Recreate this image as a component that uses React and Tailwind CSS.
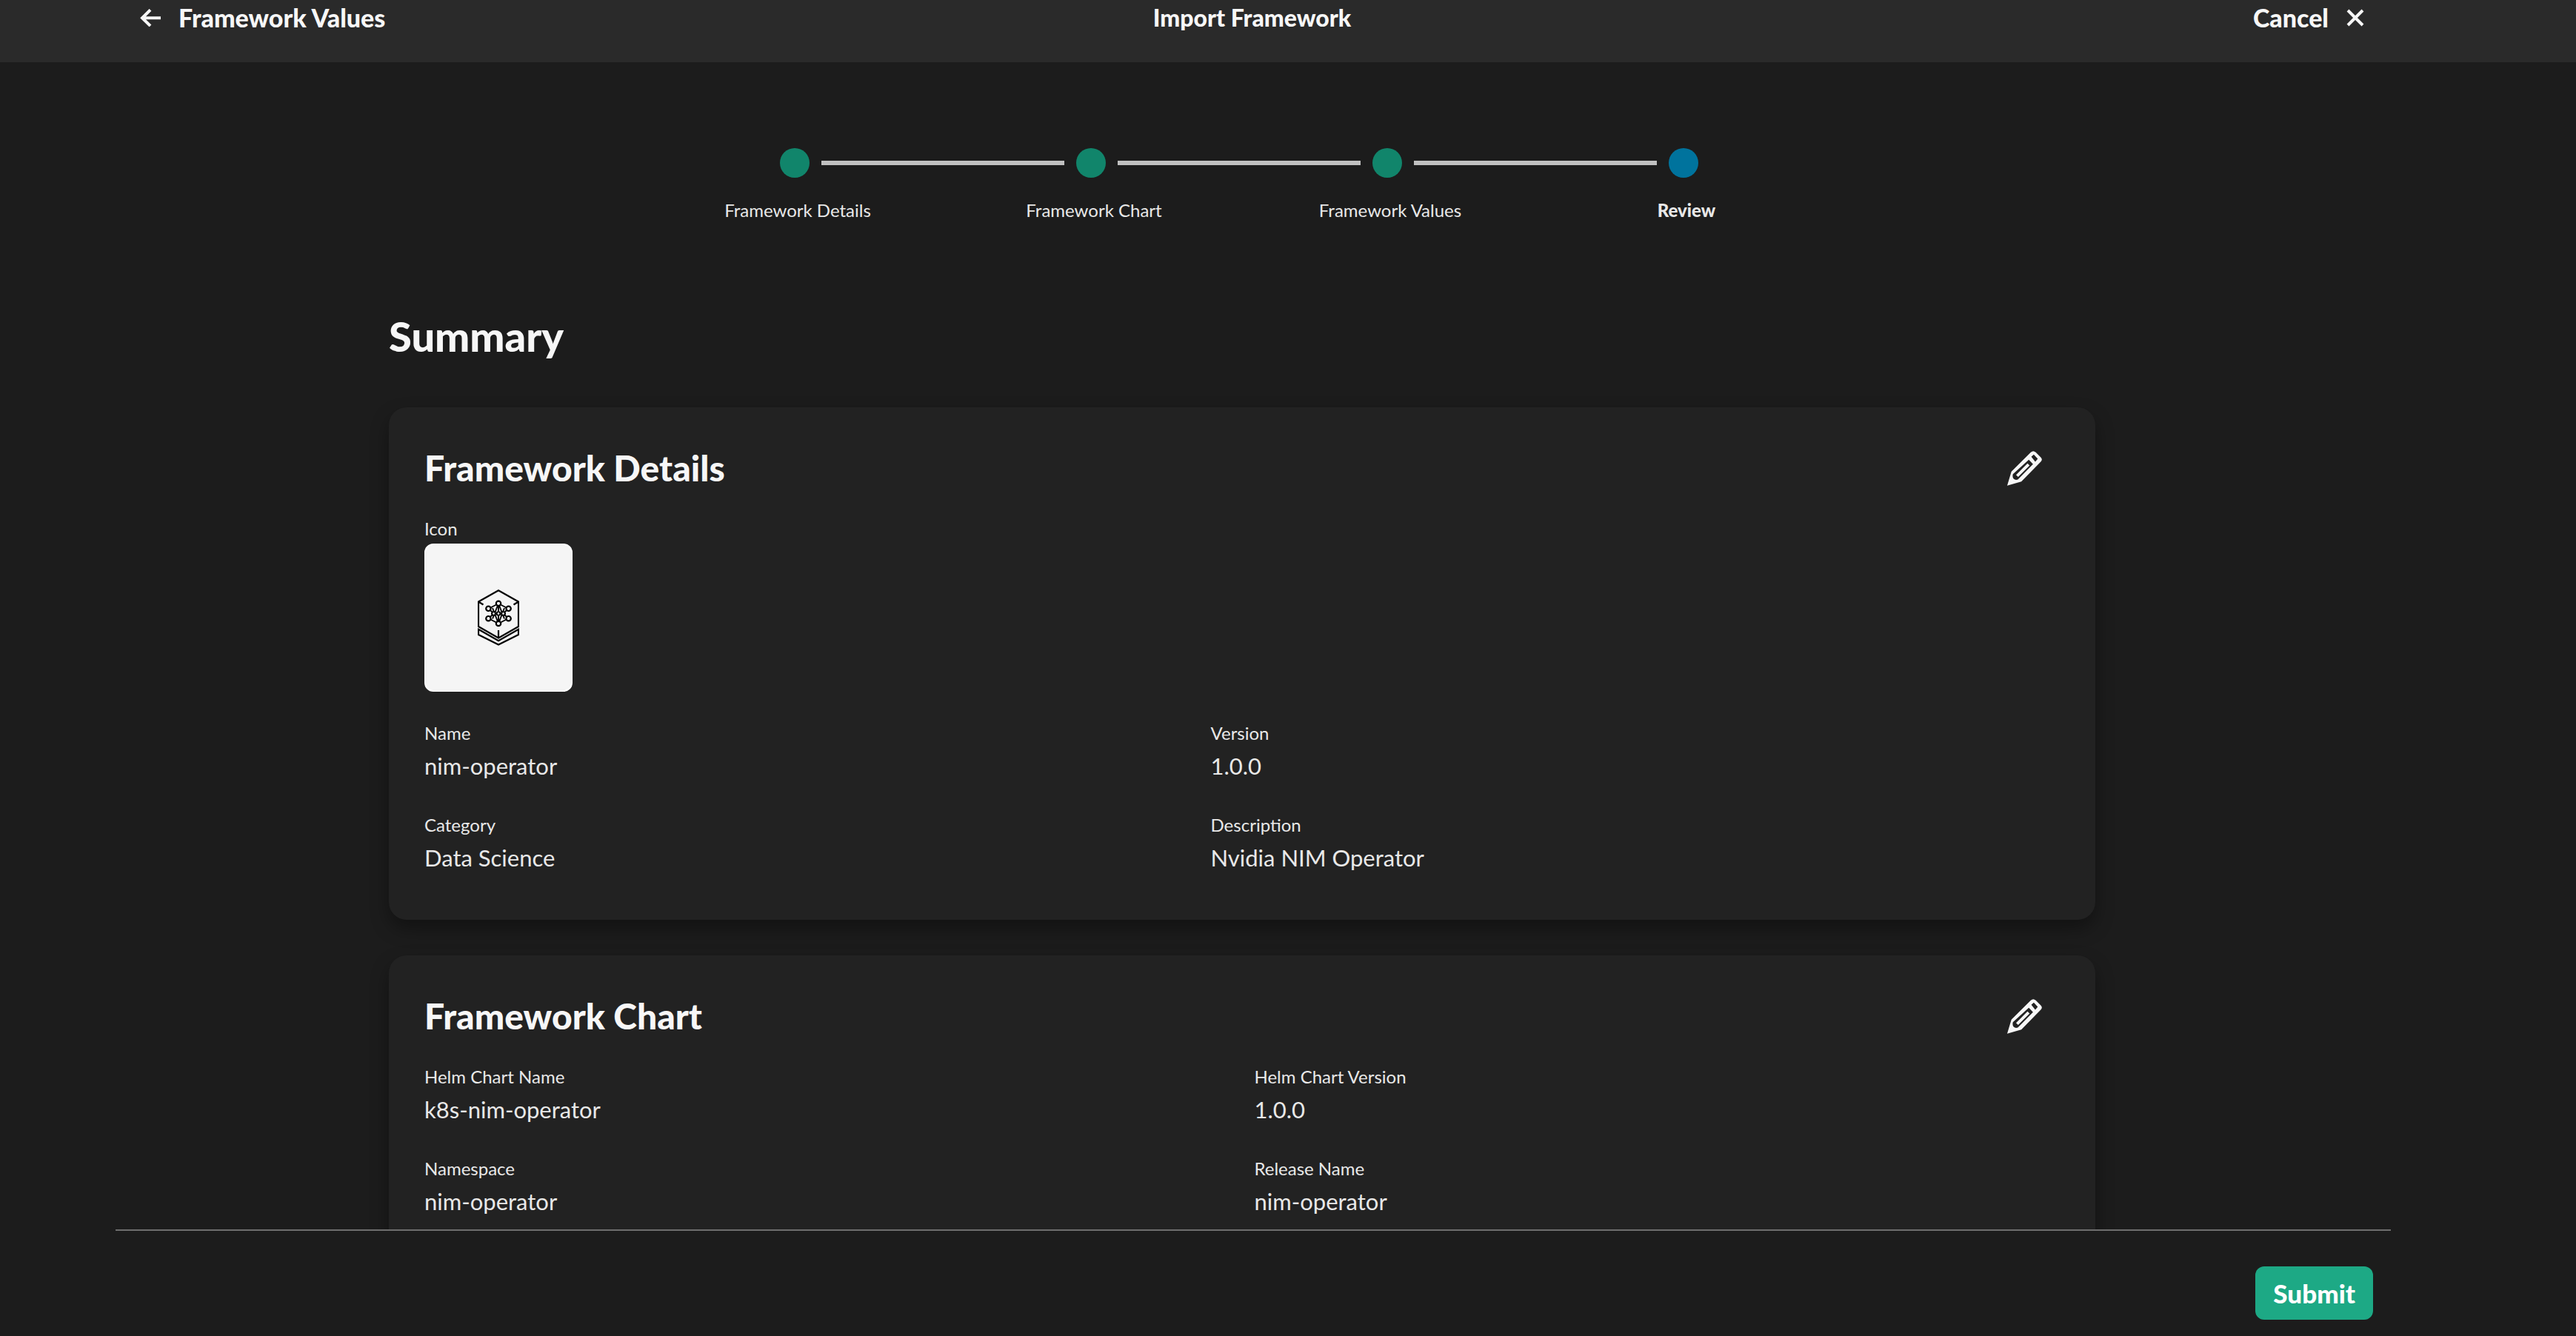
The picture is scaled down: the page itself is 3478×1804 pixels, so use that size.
import React from "react";

const STEPS = [
  { label: "Framework Details", done: true },
  { label: "Framework Chart", done: true },
  { label: "Framework Values", done: true },
  { label: "Review", done: false },
];

function ArrowLeft() {
  return (
    <svg viewBox="0 0 28 24" className="h-6 w-7" fill="none" stroke="currentColor" strokeWidth="4" aria-hidden="true">
      <path d="M28 12.3H3M14 1.3 3 12.3 14 23" />
    </svg>
  );
}

function CloseIcon() {
  return (
    <svg viewBox="0 0 24 24" className="size-6" fill="none" stroke="currentColor" strokeWidth="4" aria-hidden="true">
      <path d="M2 2 22 22M22 2 2 22" />
    </svg>
  );
}

function PencilIcon() {
  return (
    <svg viewBox="0 0 140 140" className="size-[47px]" aria-hidden="true">
      <path
        fill="currentColor"
        fillRule="evenodd"
        d="M0 139 17 83 95 5Q105-4 115 5L135 25Q144 34 135 43L57 123ZM97 23 107 14 123 31 113 43ZM23 93 87 35 104 53 43 115Q32 118 26 112 20 106 23 93Z"
      />
      <path stroke="currentColor" strokeWidth="12" d="M40 100 86 54" />
    </svg>
  );
}

const NODES = [
  [28, 18.8],
  [14.4, 25.8],
  [41.6, 25.8],
  [14.4, 39.2],
  [41.6, 39.2],
  [28, 46],
];

function OperatorLogo() {
  return (
    <svg viewBox="0 0 56 76" className="h-[76px] w-14" fill="none" stroke="black" strokeWidth="2.2" aria-hidden="true">
      <path d="M28 1.2 55 16.5V50L28 65.5 1 50V16.5Z" />
      <path d="M1 16.5 7.5 20.5M55 16.5 48.5 20.5M28 55V65" />
      <path d="M1 53.8 28 69.2 55 53.8V61L28 74.6 1 61Z" />
      <path d="M28 19V46M28 19 14.5 26M28 19 41.5 26M28 46 14.5 39M28 46 41.5 39M28 19 20 39.5M28 19 36 39.5M28 46 20 25M28 46 36 25M14.5 26 22 32.5 14.5 39M41.5 26 34 32.5 41.5 39M18 32.5H38" strokeWidth="1.9" />
      {NODES.map(([x, y]) => (
        <circle key={`${x}-${y}`} cx={x} cy={y} r="3.2" fill="#f5f5f5" />
      ))}
      {[21.5, 28, 34.5].map((x) => (
        <circle key={x} cx={x} cy="32.5" r="2.3" fill="#f5f5f5" strokeWidth="1.8" />
      ))}
    </svg>
  );
}

function Stepper() {
  return (
    <div className="flex flex-col items-center">
      <div className="mr-2 flex w-[1240px] items-center gap-4" aria-hidden="true">
        {STEPS.map((step, i) => (
          <React.Fragment key={step.label}>
            {i > 0 && <span className="h-1.5 flex-1 bg-[#c0c0c0]" />}
            <span className={step.done ? "size-10 rounded-full bg-[#11856b]" : "size-10 rounded-full bg-[#00739d]"} />
          </React.Fragment>
        ))}
      </div>
      <ol className="mt-[26px] grid w-[1600px] grid-cols-4 text-center text-[24px] leading-9">
        {STEPS.map((step) => (
          <li key={step.label} className={step.done ? "" : "font-black"}>
            {step.label}
          </li>
        ))}
      </ol>
    </div>
  );
}

function Field({ label, value }) {
  return (
    <div>
      <dt className="text-[24px] leading-9">{label}</dt>
      <dd className="text-[31px] leading-[52px]">{value}</dd>
    </div>
  );
}

function Card({ title, children }) {
  return (
    <section className="rounded-3xl bg-[#222222] px-12 pt-[54px] pb-[58px] shadow-[0_12px_24px_rgba(0,0,0,0.35)]">
      <div className="flex h-14 items-center justify-between">
        <h2 className="text-[48px] leading-[56px] font-black text-[#f7f7f7]">{title}</h2>
        <button type="button" aria-label={`Edit ${title}`} className="px-6 text-[#f7f7f7]">
          <PencilIcon />
        </button>
      </div>
      {children}
    </section>
  );
}

export default function App() {
  return (
    <div className="flex h-screen flex-col overflow-hidden bg-[#1c1c1c] font-['Lato',sans-serif] text-[#e8e8e8]">
      <header className="grid shrink-0 grid-cols-3 bg-[#2a2a2a] pr-[286px] pb-9 pl-[189px] text-[34px] leading-[48px] font-black text-[#f7f7f7]">
        <button type="button" className="flex items-center gap-6 justify-self-start">
          <ArrowLeft />
          Framework Values
        </button>
        <h1 className="text-center text-[32px]">Import Framework</h1>
        <button type="button" className="flex items-center gap-6 justify-self-end">
          Cancel
          <CloseIcon />
        </button>
      </header>

      <main className="min-h-0 flex-1 overflow-hidden pt-[116px] pr-[280px] pl-[156px]">
        <Stepper />
        <div className="mx-auto w-full max-w-[2304px] pt-[120px]">
          <h2 className="text-[56px] leading-[64px] font-black text-[#f7f7f7]">Summary</h2>
          <div className="mt-16 flex flex-col gap-12">
            <Card title="Framework Details">
              <p className="mt-9 text-[24px] leading-9">Icon</p>
              <div className="mt-0.5 flex size-[200px] items-center justify-center rounded-xl border-2 border-white bg-[#f5f5f5]">
                <OperatorLogo />
              </div>
              <dl className="mt-[38px] grid grid-cols-[25fr_27fr] gap-y-9">
                <Field label="Name" value="nim-operator" />
                <Field label="Version" value="1.0.0" />
                <Field label="Category" value="Data Science" />
                <Field label="Description" value="Nvidia NIM Operator" />
              </dl>
            </Card>
            <Card title="Framework Chart">
              <dl className="mt-9 grid grid-cols-[34fr_33fr] gap-y-9">
                <Field label="Helm Chart Name" value="k8s-nim-operator" />
                <Field label="Helm Chart Version" value="1.0.0" />
                <Field label="Namespace" value="nim-operator" />
                <Field label="Release Name" value="nim-operator" />
              </dl>
            </Card>
          </div>
        </div>
      </main>

      <footer className="mr-[250px] ml-[156px] flex shrink-0 justify-end border-t-2 border-[#6e6e6e] pt-12 pr-6 pb-[22px]">
        <button type="button" className="h-[72px] rounded-xl bg-[#1da985] px-6 text-[35px] leading-[48px] font-black text-white">
          Submit
        </button>
      </footer>
    </div>
  );
}
